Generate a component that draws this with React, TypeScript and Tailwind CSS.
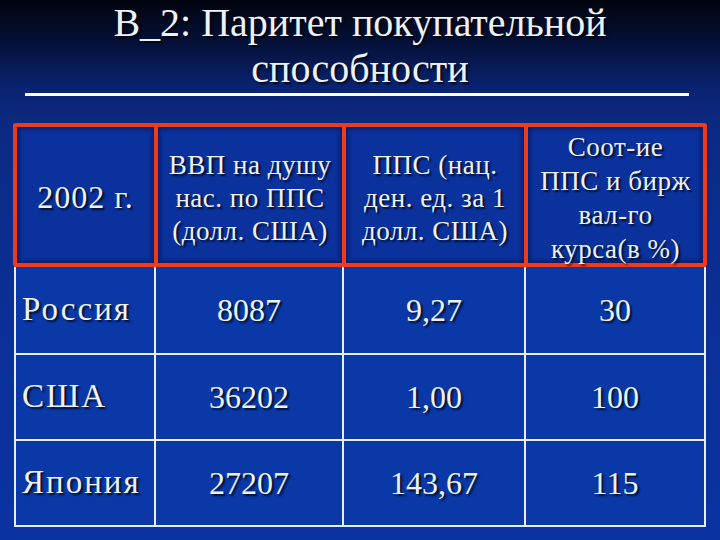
import React from "react";

const shadow = "[text-shadow:2px_2px_2px_rgba(0,0,0,0.75)]";

const rows = [
  ["Россия", "8087", "9,27", "30"],
  ["США", "36202", "1,00", "100"],
  ["Япония", "27207", "143,67", "115"],
];

export default function App() {
  return (
    <div className="w-[720px] h-[540px] overflow-hidden bg-[linear-gradient(to_bottom,#01040e_0%,#041038_8%,#0a2370_16%,#0c2a84_24%,#0b2f96_60%,#0a33a2_100%)] font-['Liberation_Serif'] text-[#eef1f8]">
      <div className={`flex flex-col items-center text-[40px] leading-[46px] ${shadow}`}>
        <div className="whitespace-nowrap">B_2: Паритет покупательной</div>
        <div className="whitespace-nowrap">способности</div>
      </div>
      <div className="ml-[25px] mt-[1px] h-[3px] w-[664px] bg-white" />
      <div className="ml-[13px] mt-[27px] w-[694px]">
        {/* header */}
        <div className="flex h-[144px] rounded-[3px] border-[4px] border-[#f03a1a] bg-[#0b319c]">
          <div className={`flex w-[137px] items-center justify-center pt-[4px] text-[32px] tracking-[1px] ${shadow} shadow-[inset_0_0_4px_2px_rgba(5,20,80,0.7)]`}>
            2002 г.
          </div>
          <div className="w-[4px] bg-[#f03a1a]" />
          <div className={`flex w-[184px] items-center justify-center pt-[7px] text-center text-[27px] leading-[33px] tracking-[0.5px] ${shadow} whitespace-nowrap shadow-[inset_0_0_4px_2px_rgba(5,20,80,0.7)]`}>
            <div>
              ВВП на душу
              <br />
              нас. по ППС
              <br />
              (долл. США)
            </div>
          </div>
          <div className="w-[4px] bg-[#f03a1a]" />
          <div className={`flex w-[178px] items-center justify-center pt-[7px] text-center text-[27px] leading-[33px] tracking-[0.5px] ${shadow} whitespace-nowrap shadow-[inset_0_0_4px_2px_rgba(5,20,80,0.7)]`}>
            <div>
              ППС (нац.
              <br />
              ден. ед. за 1
              <br />
              долл. США)
            </div>
          </div>
          <div className="w-[4px] bg-[#f03a1a]" />
          <div className={`flex flex-1 items-center justify-center pt-[6px] text-center text-[27px] leading-[34px] tracking-[0.5px] ${shadow} whitespace-nowrap shadow-[inset_0_0_4px_2px_rgba(5,20,80,0.7)]`}>
            <div>
              Соот-ие
              <br />
              ППС и бирж
              <br />
              вал-го
              <br />
              курса(в %)
            </div>
          </div>
        </div>
        {/* body */}
        <div className="ml-[1px] w-[692px] border-x-2 border-b-2 border-[#e6eeff] bg-[#0a38a6]">
          {rows.map((r, i) => (
            <div
              key={i}
              className={`flex h-[86px] ${i > 0 ? "border-t-2 border-[#e6eeff]" : ""}`}
            >
              <div className={`flex w-[138px] items-center pl-[6px] text-[33px] tracking-[2px] ${shadow} whitespace-nowrap`}>
                {r[0]}
              </div>
              <div className={`flex w-[188px] items-center justify-center border-l-2 border-[#e6eeff] text-[32px] ${shadow}`}>
                {r[1]}
              </div>
              <div className={`flex w-[182px] items-center justify-center border-l-2 border-[#e6eeff] text-[32px] ${shadow}`}>
                {r[2]}
              </div>
              <div className={`flex flex-1 items-center justify-center border-l-2 border-[#e6eeff] text-[32px] ${shadow}`}>
                {r[3]}
              </div>
            </div>
          ))}
        </div>
      </div>
    </div>
  );
}
